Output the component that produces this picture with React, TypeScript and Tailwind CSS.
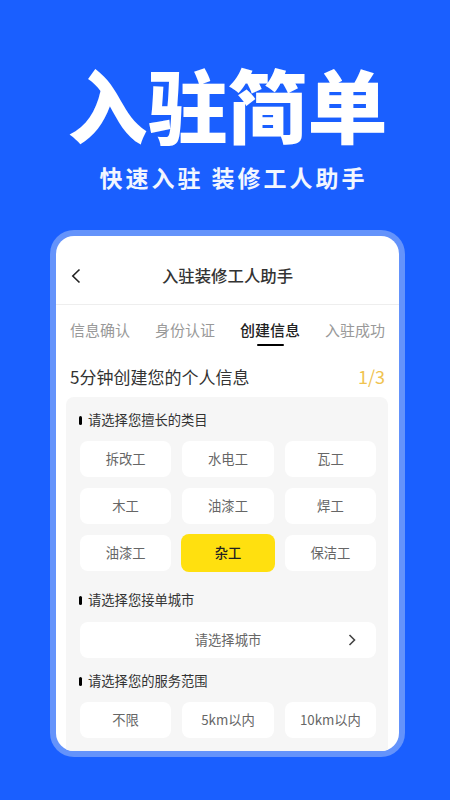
const categories = ['拆改工', '水电工', '瓦工', '木工', '油漆工', '焊工', '油漆工', '杂工', '保洁工'];
const ranges = ['不限', '5km以内', '10km以内'];
const tabs = ['信息确认', '身份认证', '创建信息', '入驻成功'];

function Option({ label, active }: { label: string; active?: boolean }) {
  return (
    <div
      className={
        active
          ? 'h-[38px] -my-px -mx-px rounded-lg bg-[#ffe00f] flex items-center justify-center text-[13.3px] font-medium text-[#222]'
          : 'h-9 rounded-lg bg-white flex items-center justify-center text-[13.3px] text-[#666]'
      }
    >
      {label}
    </div>
  );
}

function SectionTitle({ text }: { text: string }) {
  return (
    <div className="flex items-center gap-[6px] h-5 pl-[13px] text-[13.3px] text-[#333]">
      <span className="w-[3px] h-[9px] rounded-full bg-black" />
      {text}
    </div>
  );
}

export default function App() {
  return (
    <div
      className="w-[450px] h-[800px] overflow-hidden bg-[#1a5fff] flex flex-col items-center"
      style={{ fontFamily: '"Noto Sans CJK SC", "Liberation Sans", sans-serif' }}
    >
      <h1 className="mt-[54px] ml-[5px] h-[96px] leading-[96px] text-[80px] font-black text-white whitespace-nowrap">入驻简单</h1>
      <p className="mt-[11px] ml-[17px] h-[32px] leading-[32px] text-[23px] font-bold tracking-[3px] text-[#f2f6ff] whitespace-nowrap">
        快速入驻 装修工人助手
      </p>

      <div className="mt-[37px] ml-[5px] w-[355px] h-[527px] rounded-[24px] bg-[#6493fb] p-[6px]">
        <div className="h-full rounded-[18px] bg-white overflow-hidden flex flex-col">
          <div className="relative h-[69px] shrink-0 flex items-center justify-center border-b border-[#eeeeee]">
            <svg className="absolute left-[14px] top-[32px]" width="12" height="16" viewBox="0 0 12 16" fill="none">
              <path d="M9.5 1.5 L2.8 8 L9.5 14.5" stroke="#222" strokeWidth="1.6" />
            </svg>
            <span className="text-[16.4px] font-medium text-[#333] mt-[10px]">入驻装修工人助手</span>
          </div>

          <div className="h-[49px] shrink-0 px-[14px] flex items-start justify-between">
            {tabs.map((t, i) => (
              <div key={t} className="relative pt-[14px] leading-[22px] text-[15px] text-[#999]">
                <span className={i === 2 ? 'font-medium text-[#222]' : ''}>{t}</span>
                {i === 2 && <span className="absolute left-[17px] top-[39px] w-[27px] h-[2px] rounded-full bg-black" />}
              </div>
            ))}
          </div>

          <div className="h-[43px] shrink-0 pt-[2px] px-[14px] flex items-center justify-between text-[17px] text-[#333]">
            <span>5分钟创建您的个人信息</span>
            <span className="text-[18px] text-[#f0c350]">1/3</span>
          </div>

          <div className="flex-1 ml-[10px] mr-[11px] rounded-t-lg bg-[#f6f6f6] pt-[13px]">
            <SectionTitle text="请选择您擅长的类目" />
            <div className="mt-[11px] pl-[14px] pr-[12px] grid grid-cols-3 gap-x-[11.25px] gap-y-[11px]">
              {categories.map((c, i) => (
                <Option key={i} label={c} active={i === 7} />
              ))}
            </div>

            <div className="mt-[19px]">
              <SectionTitle text="请选择您接单城市" />
            </div>
            <div className="relative mt-[12px] ml-[14px] mr-[12px] h-9 rounded-lg bg-white flex items-center justify-center text-[13.3px] text-[#666]">
              请选择城市
              <svg className="absolute right-[19px] top-[12px]" width="10" height="12" viewBox="0 0 10 12" fill="none">
                <path d="M2.5 1 L7.5 6 L2.5 11" stroke="#444" strokeWidth="1.6" />
              </svg>
            </div>

            <div className="mt-[13px]">
              <SectionTitle text="请选择您的服务范围" />
            </div>
            <div className="mt-[11px] pl-[14px] pr-[12px] grid grid-cols-3 gap-x-[11.25px]">
              {ranges.map((r) => (
                <Option key={r} label={r} />
              ))}
            </div>
          </div>
        </div>
      </div>
    </div>
  );
}
